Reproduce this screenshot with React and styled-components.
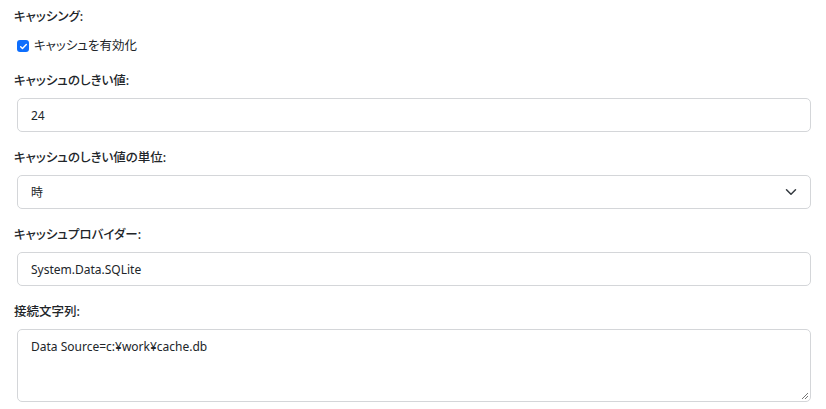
import React from 'react'
import styled, { createGlobalStyle } from 'styled-components'

const GlobalStyle = createGlobalStyle`
  body {
    margin: 0;
    background: #fff;
    font-family: "Noto Sans", "Noto Sans CJK JP", sans-serif;
    font-feature-settings: "palt";
    color: #212529;
  }
`

const Form = styled.div`
  padding: 8px 15px 0 14px;
`

const Group = styled.div`
  margin-bottom: ${p => p.$gap || 17}px;
`

const Label = styled.div`
  font-size: 12.5px;
  font-weight: 500;
  line-height: 18px;
  margin-bottom: ${p => p.$tight ? '11px' : '8px'};
  color: #212529;
`

const CheckRow = styled.label`
  display: flex;
  align-items: center;
  gap: 5px;
  padding-left: 3px;
  font-size: 12.5px;
  line-height: 18px;
  color: #212529;
`

const Box = styled.span`
  width: 12px;
  height: 12px;
  border-radius: 3px;
  background: #0d6efd;
  display: inline-flex;
  align-items: center;
  justify-content: center;
`

const Field = styled.div`
  margin-left: 3px;
  height: ${p => p.$h || 34}px;
  box-sizing: border-box;
  border: 1px solid #d4d6d9;
  border-radius: 5px;
  padding: ${p => p.$area ? '8px 13px' : '0 13px'};
  display: flex;
  align-items: ${p => p.$area ? 'flex-start' : 'center'};
  justify-content: space-between;
  font-size: 12px;
  color: #212529;
  position: relative;
`

const Grip = styled.svg`
  position: absolute;
  right: 1px;
  bottom: 1px;
`

const Chevron = () => (
  <svg width="12" height="12" viewBox="0 0 16 16">
    <path d="M2 5l6 6 6-6" fill="none" stroke="#343a40" strokeWidth="2" strokeLinecap="round" strokeLinejoin="round" />
  </svg>
)

export default function App() {
  return (
    <>
      <GlobalStyle />
      <Form>
        <Group $gap={17}>
          <Label $tight>キャッシング:</Label>
          <CheckRow>
            <Box>
              <svg width="9" height="9" viewBox="0 0 16 16">
                <path d="M3 8.5l3.2 3L13 4.5" fill="none" stroke="#fff" strokeWidth="2.6" strokeLinecap="round" strokeLinejoin="round" />
              </svg>
            </Box>
            キャッシュを有効化
          </CheckRow>
        </Group>
        <Group>
          <Label>キャッシュのしきい値:</Label>
          <Field>24</Field>
        </Group>
        <Group>
          <Label>キャッシュのしきい値の単位:</Label>
          <Field>時<Chevron /></Field>
        </Group>
        <Group>
          <Label>キャッシュプロバイダー:</Label>
          <Field>System.Data.SQLite</Field>
        </Group>
        <Group>
          <Label>接続文字列:</Label>
          <Field $area $h={73}>
            Data Source=c:¥work¥cache.db
            <Grip width="9" height="9" viewBox="0 0 9 9">
              <path d="M8 2L2 8M8 5L5 8" stroke="#777" strokeWidth="1" />
            </Grip>
          </Field>
        </Group>
      </Form>
    </>
  )
}
